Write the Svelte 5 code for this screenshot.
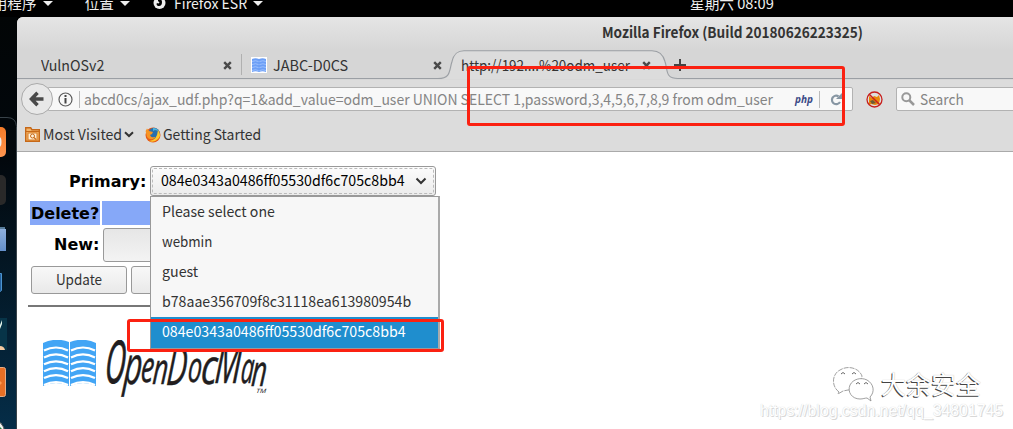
<script>
  const options = [
    { text: 'Please select one', fit: 0.963 },
    { text: 'webmin', fit: 0.91 },
    { text: 'guest', fit: 0.97 },
    { text: 'b78aae356709f8c31118ea613980954b', fit: 0.965 },
    { text: '084e0343a0486ff05530df6c705c8bb4', fit: 0.968 }
  ];
  const selected = 4;
  const waves = [0, 1, 2, 3, 4, 5];
</script>

{#snippet cross()}
  <svg class="cross" width="9" height="9" viewBox="0 0 9 9"><path d="M1.2 1.2 7.8 7.8M7.8 1.2 1.2 7.8" stroke="#4a4a4a" stroke-width="2.4" /></svg>
{/snippet}

{#snippet favicon()}
  <svg class="fav" width="16" height="16" viewBox="0 0 16 16">
    <rect width="16" height="16" fill="#fff" />
    <path d="M1 2q3.500-1.500 7 0q3.500-1.500 7 0v13q-3.500-1.500-7 0q-3.500-1.500-7 0z" fill="#6c9ff6" />
    <path d="M1 4.500q3.500-1.500 6.500 0M8.500 4.500q3.500-1.500 6.500 0M1 7.500q3.500-1.500 6.500 0M8.500 7.500q3.500-1.500 6.500 0M1 10.500q3.500-1.500 6.500 0M8.500 10.500q3.500-1.500 6.500 0M1 13.500q3.500-1.500 6.500 0M8.500 13.500q3.500-1.500 6.500 0" fill="none" stroke="#a9c9ff" stroke-width=".8" />
  </svg>
{/snippet}

<div class="desktop">
  <header class="panel">
    <span class="apps">应用程序</span><i class="tri t1"></i>
    <span class="places">位置</span><i class="tri t2"></i>
    <svg class="ffmono" width="13" height="14" viewBox="0 0 13 14"><circle cx="6.500" cy="7" r="6" fill="#eee" /><path d="M5 2.500c2 0 4 1 4 3.500S8 10 6 10 3 8.500 4 7c1 .8 2 .5 2.500-.5L5 5z" fill="#000" /></svg>
    <span class="appname">Firefox ESR</span><i class="tri t3"></i>
    <span class="clock">星期六 08:09</span>
  </header>

  <div class="stage">
    <aside class="dock">
      <svg width="17" height="412" viewBox="0 17 17 412">
        <defs>
          <linearGradient id="sea" x2="0" y2="1"><stop stop-color="#020506" /><stop offset=".35" stop-color="#02080d" /><stop offset="1" stop-color="#052d48" /></linearGradient>
          <linearGradient id="org" x2="0" y2="1"><stop stop-color="#f47b28" /><stop offset="1" stop-color="#ff9550" /></linearGradient>
          <linearGradient id="fold" x2="0" y2="1"><stop stop-color="#8eb0dd" /><stop offset="1" stop-color="#6490cb" /></linearGradient>
        </defs>
        <rect y="17" width="17" height="412" fill="url(#sea)" />
        <path d="M0 117.500h7q9 0 9.500 9V429" fill="none" stroke="#39434a" />
        <rect x="-20" y="127" width="26" height="30" rx="5" fill="url(#org)" />
        <ellipse cx="-1" cy="142" rx="2.500" ry="5" fill="#eee" />
        <rect x="-20" y="175" width="26" height="30" rx="5" fill="#292929" />
        <path d="M0 227h5v4H0z" fill="#557b99" /><path d="M0 229h6v22H0z" fill="url(#fold)" />
        <path d="M-2 273.500h3.500v17L-2 293" fill="#235f9c" stroke="#4c94cf" />
        <path d="M0 318h7v32H0z" fill="#073448" />
        <path d="M0 325l2-5v4l-2 5z" fill="#e5f5eb" /><path d="M0 346q4 0 5 4H0z" fill="#f5c9a0" />
        <rect x="-20" y="367.500" width="25.500" height="29" rx="2" fill="#e76f25" stroke="#e6ad86" />
        <path d="M0 381l2 2-2 2z" fill="#ff9b52" />
        <circle cx="-8" cy="432" r="12.500" fill="#f3f3f3" stroke="#555" /><path d="M0 427l2 2-2 1z" fill="#22823b" />
      </svg>
    </aside>

    <main class="window">
      <div class="titlebar"><b>Mozilla Firefox (Build 20180626223325)</b></div>
      <nav class="tabs">
        <svg class="tabline" width="996" height="30" viewBox="0 0 996 30">
          <path d="M422 29.500c13 0 11-9 14-18 2-8 6-10.500 12-10.500h187c7 0 10 3 12 10.500 3 9 1 16.500 12 16.500v1.500z" fill="#dcdcdc" />
          <path d="M0 28.500h421c13 0 11-8 14-17C437 3 441 .7 447 .7h188c7 0 11 3.300 13 10.800 3 9 0 17 13 17H996" fill="none" stroke="#9b9fa4" stroke-width="1.100" />
        </svg>
        <div class="tab one"><span>VulnOSv2</span>{@render cross()}</div>
        <div class="tab two">{@render favicon()}<span>JABC-D0CS</span>{@render cross()}</div>
        <div class="tab three"><span>http://192....%20odm_user</span>{@render cross()}</div>
        <svg class="plus" width="12" height="12" viewBox="0 0 12 12"><path d="M6 0v12M0 6h12" stroke="#444" stroke-width="2" /></svg>
      </nav>
      <div class="toolbar">
        <div class="back"><svg width="16" height="16" viewBox="0 0 16 16"><path d="M14.500 8H3M8.500 1.800 2.500 8l6 6.200" fill="none" stroke="#4a4a4a" stroke-width="3.500" /></svg></div>
        <div class="url">
          <svg class="info" width="15" height="15" viewBox="0 0 15 15"><circle cx="7.500" cy="7.500" r="6.500" fill="none" stroke="#5c5c5c" stroke-width="1.200" /><path d="M7.500 6v5.500M7.500 3v2" stroke="#444" stroke-width="2" /></svg>
          <i class="bar"></i>
          <span class="address">abcd0cs/ajax_udf.php?q=1&amp;add_value=odm_user UNION SELECT 1,password,3,4,5,6,7,8,9 from odm_user</span>
          <em>php</em><i class="bar second"></i>
          <svg class="reload" width="12" height="13" viewBox="0 0 12 13"><path d="M8.500 3.200A4.300 4.300 0 1 0 10 9" fill="none" stroke="#8796a3" stroke-width="2.200" /><path d="M12 0v6H6z" fill="#8796a3" /></svg>
        </div>
        <svg class="fox" width="17" height="17" viewBox="0 0 17 17"><circle cx="8.500" cy="8.500" r="7" fill="#dedede" /><path d="M3 5l3 2 2-2 3 1 2-2 1 4-1 5-4 1-4-1-2 1z" fill="#e98609" /><path d="M4 10l3-1 3 3-4 1zM9 5l4 4" fill="#6b5b36" /><circle cx="8.500" cy="8.500" r="7.500" fill="none" stroke="#c8201e" stroke-width="1.300" /><path d="M3.200 3.200l10.600 10.600" stroke="#c8201e" stroke-width="1.500" /></svg>
        <div class="search"><svg width="14" height="14" viewBox="0 0 14 14"><circle cx="5.300" cy="5.300" r="4" fill="none" stroke="#999" stroke-width="2" /><path d="M8 8l5 5" stroke="#999" stroke-width="2.500" /></svg><span>Search</span></div>
      </div>
      <div class="bookmarks">
        <svg width="15" height="15" viewBox="0 0 15 15"><path d="M.7 14.300V.7h5l1.200 2h7.400v11.600z" fill="#f4b56a" stroke="#c66818" stroke-width="1.400" /><path d="M1 4.500h13" stroke="#c66818" /><rect x="3" y="6" width="9" height="7" fill="#fff0d8" stroke="#d77b22" /><circle cx="7.500" cy="9" r="2" fill="none" stroke="#c66818" /><path d="M9 10.500l2 2" stroke="#c66818" stroke-width="1.200" /></svg>
        <span class="most">Most Visited</span>
        <svg class="chev" width="10" height="7" viewBox="0 0 10 7"><path d="M1 1.200 5 5l4-3.800" fill="none" stroke="#333" stroke-width="2" /></svg>
        <svg class="firefox" width="16" height="16" viewBox="0 0 16 16"><circle cx="8" cy="8" r="7.500" fill="#e65b18" /><circle cx="9" cy="6.500" r="5.700" fill="#286fae" /><path d="M8 1q4 0 6 3l-4-1-2 1z" fill="#4ab5de" /><path d="M.6 4L2 1.500 4 4l4 1-1 2-2 1q1 3 4 2 2 0 1 1-5 3-8-1z" fill="#f69423" /><path d="M13 3q4 6 0 9-4 4-9 2 8 0 9-11z" fill="#ffc72c" /></svg>
        <span class="start">Getting Started</span>
      </div>

      <section class="page">
        <div class="row primary">
          <b>Primary:</b>
          <div class="select">
            <div class="focus"><span>{options[selected].text}</span><svg width="12" height="8" viewBox="0 0 12 8"><path d="M1.500 1.500 6 6l4.500-4.500" fill="none" stroke="#333" stroke-width="2" /></svg></div>
            <ul>{#each options as o, n}<li class:on={n === selected}><span style="transform: scaleX({o.fit})">{o.text}</span></li>{/each}</ul>
          </div>
        </div>
        <div class="row delete"><b>Delete?</b><i></i></div>
        <div class="row new"><b>New:</b><div class="input"></div></div>
        <div class="row buttons"><button><span>Update</span></button><button></button></div>
        <div class="rule"></div>
        <div class="brand">
          <svg width="240" height="70" viewBox="0 0 240 70">
            <path d="M0 3Q13-3 26 2V46Q13 40 0 46zM27 2Q40-3 53 3V46Q40 40 27 46z" fill="#42a5f5" />
            {#each waves as w}<path d="M1 {10.5 + w * 6.900}q12-6 24 0M28 {10.5 + w * 6.900}q12-6 24 0" fill="none" stroke="#fff" stroke-width="2.200" />{/each}
            <g class="script" transform="translate(61 43) skewX(-5)">
              <text class="cap" textLength="20" lengthAdjust="spacingAndGlyphs" x="0">O</text>
              <text class="pee" textLength="18" lengthAdjust="spacingAndGlyphs" x="19" y="1">p</text>
              <text class="low" textLength="13" lengthAdjust="spacingAndGlyphs" x="36" y="-1">e</text>
              <text class="low" textLength="15" lengthAdjust="spacingAndGlyphs" x="48" y="1">n</text>
              <text class="dee" textLength="20" lengthAdjust="spacingAndGlyphs" x="62" y="2">D</text>
              <text class="low" textLength="14" lengthAdjust="spacingAndGlyphs" x="83" y="-1">o</text>
              <text class="low tall" textLength="16" lengthAdjust="spacingAndGlyphs" x="96" y="1">c</text>
              <text class="em" textLength="26" lengthAdjust="spacingAndGlyphs" x="110">M</text>
              <text class="low" textLength="13" lengthAdjust="spacingAndGlyphs" x="136">a</text>
              <text class="low" textLength="15" lengthAdjust="spacingAndGlyphs" x="147" y="3">n</text>
              <text class="tm" x="153" y="10" textLength="10" lengthAdjust="spacingAndGlyphs">TM</text>
            </g>
          </svg>
        </div>
      </section>
    </main>
  </div>

  <div class="mark m1"></div>
  <div class="mark m2"></div>
  <div class="wechat">
    <svg width="42" height="36" viewBox="0 0 42 36"><g fill="#fff" stroke="#888" stroke-width=".8"><path d="M6 26C-2 20-1 8 7 4c8-5 19-2 22 6 0 0-2 14-14 14l-5 1-5 3z" stroke-dasharray="5 1" /><path d="M37 31c5-5 4-13-3-17-6-3-14-1-17 5-3 7 2 14 10 14 3 0 5-1 7-1l4 3z" /></g><path d="M8 8q2-3 4 0M19 8q2-3 4 0M23 18q2-3 4 0M31 18q2-3 4 0" fill="none" stroke="#666" /></svg>
    <span>大余安全</span>
  </div>
  <div class="blog">https://blog.csdn.net/qq_34801745</div>
</div>

<style>
  :global(body) { margin: 0; }
  .desktop { position: relative; width: 1013px; height: 429px; overflow: hidden; background: #000; color: #333; font: 14.67px/20px "Noto Sans CJK SC", sans-serif; }
  .desktop * { box-sizing: border-box; }
  svg { display: block; flex: none; }
  span { display: block; white-space: nowrap; transform-origin: 0 50%; }
  .panel { height: 17px; display: flex; align-items: flex-start; color: #eee; line-height: 20px; overflow: hidden; }
  .panel span { margin-top: -7px; flex: none; }
  .apps { margin-left: -22px; }
  .tri { border: 5px solid transparent; border-top-color: #eee; border-bottom: 0; margin-top: 1px; flex: none; }
  .t1 { margin-left: 6px; }
  .places { margin-left: 32px; }
  .t2 { margin-left: 6px; }
  .ffmono { margin: -4px 8px 0 23px; }
  .appname { width: 74px; transform: scaleX(.96); }
  .t3 { margin-left: 5px; }
  .clock { margin-left: 427px; }
  .stage { display: flex; height: 412px; }
  .dock { width: 17px; }
  .window { width: 996px; background: #dcdcdc; border-radius: 6px 0 0 0; overflow: hidden; }
  .titlebar { height: 33px; background: linear-gradient(#e5e5e5, #d6d6d6); padding: 6px 0 0 585px; white-space: nowrap; }
  .titlebar b { display: block; transform: scaleX(.928); transform-origin: 0 50%; margin-top: -1px; }
  .tabs { height: 30px; position: relative; background: #d6d6d6; display: flex; }
  .tabline { position: absolute; left: 0; top: 0; }
  .tab { position: relative; display: flex; align-items: center; height: 30px; flex: none; }
  .tab span { margin-top: -1px; }
  .tab .cross { margin-left: auto; }
  .one { width: 225px; padding: 0 10px 0 24px; }
  .one span { transform: scaleX(.97); }
  .one::after { content: ""; position: absolute; right: 0; top: 4px; height: 21px; width: 1px; background: #b0b0b0; }
  .two { width: 210px; padding: 0 10px 0 9px; }
  .two span { transform: scaleX(.985); }
  .fav { margin-right: 6px; }
  .three { width: 219px; padding: 0 20px 0 9px; }
  .three span { width: 170px; transform: scaleX(.918); }
  .plus { position: relative; margin: 9px 0 0 3px; }
  .toolbar { height: 38px; display: flex; align-items: center; padding-left: 4px; }
  .back { width: 32px; height: 32px; border: 1px solid #aaa; border-radius: 50%; background: #e8e8e8; display: grid; place-items: center; z-index: 1; flex: none; }
  .url { flex: none; margin-left: -5px; width: 805px; height: 24px; border: 1px solid #b2b2b2; border-radius: 0 2px 2px 0; background: #f8f8f8; display: flex; align-items: center; padding-left: 9px; color: #858585; }
  .bar { width: 1px; height: 17px; background: #bbb; margin: 0 4px 0 6px; flex: none; }
  .address { width: 711px; flex: none; margin-top: -1px; transform: scaleX(.954); }
  .url em { font: italic bold 10px/14px "Open Sans", sans-serif; color: #3b4a86; width: 18px; margin-top: -1px; }
  .second { margin: 0 10px 0 6px; }
  .fox { margin: 0 13px 0 13px; }
  .search { flex: none; width: 140px; height: 24px; border: 1px solid #b2b2b2; border-radius: 2px; background: #f8f8f8; display: flex; align-items: center; gap: 5px; padding-left: 4px; color: #858585; }
  .search span { margin-top: -1px; transform: scaleX(.936); }
  .bookmarks { height: 34px; border-bottom: 1px solid #aaa; display: flex; align-items: center; padding-left: 8px; }
  .bookmarks span { margin-top: -1px; }
  .most { margin-left: 3px; width: 81px; transform: scaleX(.965); }
  .start { transform: scaleX(.951); }
  .firefox { margin: 0 2px 0 11px; }
  .page { height: 277px; background: #fff; padding: 14px 0 0 11px; color: #000; }
  .row { display: flex; align-items: center; padding-left: 3px; }
  .row b { font: bold 16px/22px "DejaVu Sans", sans-serif; }
  .primary { height: 30px; padding-left: 41px; }
  .primary b { margin-top: 1px; }
  .select { position: relative; width: 286px; height: 30px; margin-left: 4px; border: 1px solid #999; border-radius: 3px; background: linear-gradient(#fcfcfc, #ececec); padding: 1px; }
  .focus { height: 26px; border: 1px dashed #bbb; border-radius: 2px; display: flex; align-items: center; justify-content: space-between; padding: 0 6px 0 8px; }
  .focus span { width: 246px; margin-top: -2px; transform: scaleX(.968); }
  .select ul { position: absolute; left: -1px; top: 29px; width: 290px; height: 153px; margin: 0; padding: 0; list-style: none; border: 1px solid #999; border-right-width: 2px; border-right-color: #aaa; background: #f7f7f7; color: #333; z-index: 2; }
  .select li { height: 30px; padding: 4px 0 0 11px; }
  .select li.on { height: 31px; background: #1f8ece; color: #fff; }
  .delete { height: 24px; margin-top: 5px; gap: 2px; }
  .row.delete b { width: 70px; height: 24px; line-height: 25px; background: #86a8f8; flex: none; }
  .delete i { width: 100px; height: 24px; background: #86a8f8; }
  .delete { padding-left: 2px; }
  .row.delete b { padding-left: 1px; }
  .new { height: 34px; margin-top: 3px; padding-left: 26px; }
  .input { margin-left: 4px; width: 100px; height: 34px; border: 1px solid #999; border-radius: 3px; background: linear-gradient(#e6e6e6, #f3f3f3); }
  .buttons { margin-top: 4px; gap: 4px; }
  button { width: 96px; height: 28px; border: 1px solid #999; border-radius: 3px; background: linear-gradient(#f8f8f8, #e9e9e9); font: inherit; color: #333; padding: 0; }
  button span { transform: scaleX(.92); transform-origin: 50% 50%; margin-top: -2px; }
  .rule { height: 2px; margin-top: 11px; width: 200px; background: #777; }
  .brand { padding: 33px 0 0 15px; }
  .script { font-family: "Open Sans", sans-serif; font-style: italic; fill: #211d1e; stroke: #211d1e; stroke-width: .5; }
  .cap { font-size: 59px; stroke-width: 1; }
  .dee { font-size: 54px; }
  .em { font-size: 57px; }
  .pee { font-size: 53px; }
  .low { font-size: 43px; }
  .tall { font-size: 49px; }
  .tm { font-size: 6px; stroke: none; }
  .mark { position: absolute; border: 3px solid #fb2111; border-radius: 3px; z-index: 5; }
  .m1 { left: 467px; top: 66px; width: 378px; height: 60px; }
  .m2 { left: 127px; top: 319px; width: 317px; height: 33px; }
  .wechat { position: absolute; left: 833px; top: 366px; display: flex; }
  .wechat span { font-size: 25px; line-height: 36px; color: #fff; margin: -1px 0 0 6px; text-shadow: -1px 1px 0 #444, 0 0 1px #aaa; }
  .blog { position: absolute; left: 760px; top: 401px; font: 15.850px/20px "Liberation Sans", sans-serif; color: #fff; text-shadow: 1px 1px 0 #d8d8d8, 0 0 1px #ccc; white-space: nowrap; }
</style>
